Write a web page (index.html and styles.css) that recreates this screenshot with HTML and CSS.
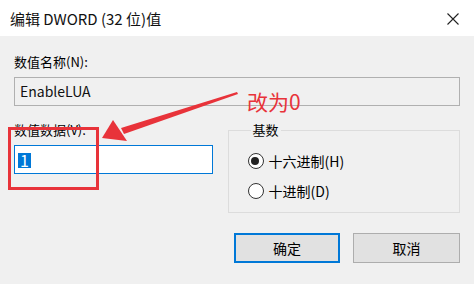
FILE: index.html
```html
<!DOCTYPE html>
<html lang="zh-CN">
  <head>
    <meta charset="UTF-8" />
    <title>编辑 DWORD (32 位)值</title>
    <link rel="stylesheet" href="styles.css">
  </head>
  <body>
    <div class="window">
      <div class="titlebar">
        <span class="title">编辑 DWORD (32 位)值</span>
        <svg class="close" width="12" height="12" viewBox="0 0 12 12">
          <path d="M0.5 0.5 L11.5 11.5 M11.5 0.5 L0.5 11.5" stroke="#222" stroke-width="1.1" fill="none" />
        </svg>
      </div>

      <div class="content">
        <div class="label">数值名称(N):</div>
        <div class="textbox readonly">EnableLUA</div>

        <div class="row">
          <div class="left">
            <div class="label">数值数据(V):</div>
            <div class="textbox focused"><span class="sel">1</span></div>
          </div>
          <fieldset class="group">
            <legend>基数</legend>
            <div class="radio"><span class="dot checked"></span>十六进制(H)</div>
            <div class="radio"><span class="dot"></span>十进制(D)</div>
          </fieldset>
        </div>

        <div class="buttons">
          <div class="btn default">确定</div>
          <div class="btn">取消</div>
        </div>
      </div>

      <!-- red annotation drawn over the dialog -->
      <div class="mark-box"></div>
      <div class="mark-text">改为0</div>
      <svg class="mark-arrow" width="474" height="284" viewBox="0 0 474 284">
        <polygon points="237,92 238,94 124,134 121,128" fill="#e8333a" />
        <polygon points="102,138 113,120 127,141" fill="#e8333a" />
      </svg>
    </div>
  </body>
</html>
```

FILE: styles.css
```css
html,
body {
  margin: 0;
  padding: 0;
}
body {
  font-family: "Noto Sans CJK SC", "Noto Sans", sans-serif;
  font-size: 13px;
  color: #000;
  background: #f0f0f0;
}
.window {
  position: relative;
  width: 474px;
  height: 284px;
  background: #f0f0f0;
  overflow: hidden;
}
.titlebar {
  height: 36px;
  background: #fff;
  display: flex;
  align-items: center;
  justify-content: space-between;
  padding: 0 15px 0 10px;
}
.title {
  font-size: 15px;
  line-height: 18px;
  margin-top: 2px;
  color: #111;
}
.close {
  margin-top: 2px;
}
.content {
  padding: 18px 14px 0 14px;
}
.label {
  line-height: 16px;
  height: 16px;
}
.textbox {
  box-sizing: border-box;
  height: 29px;
  margin-top: 7px;
  border: 1px solid #b0b0b0;
  padding: 0 5px;
  line-height: 27px;
  font-size: 14px;
}
.readonly {
  background: #f0f0f0;
  color: #111;
}
.row {
  display: flex;
  margin-top: 16px;
}
.left {
  width: 199px;
}
.left .textbox {
  margin-top: 7px;
  height: 29px;
  padding: 0 0 0 3px;
  background: #fff;
  border-color: #0078d7;
}
.sel {
  display: inline-block;
  background: #0078d7;
  color: #fff;
  font-size: 16px;
  line-height: 15px;
  height: 15px;
  padding: 0 2px;
  vertical-align: middle;
  margin-top: -1px;
}
.group {
  box-sizing: border-box;
  margin: 0 0 0 15px;
  width: 233px;
  height: 91px;
  border: 1px solid #dcdcdc;
  padding: 8px 0 0 19px;
}
.group legend {
  padding: 0 2px;
  margin-left: 3px;
  line-height: 16px;
}
.radio {
  display: flex;
  align-items: center;
  height: 30px;
  font-size: 14px;
}
.dot {
  box-sizing: border-box;
  width: 16px;
  height: 16px;
  border: 1.3px solid #333;
  border-radius: 50%;
  background: #fff;
  margin-right: 5px;
  position: relative;
}
.dot.checked::after {
  content: "";
  position: absolute;
  left: 2.7px;
  top: 2.7px;
  width: 8px;
  height: 8px;
  border-radius: 50%;
  background: #222;
}
.buttons {
  display: flex;
  justify-content: flex-end;
  gap: 13px;
  margin-top: 20px;
}
.btn {
  box-sizing: border-box;
  width: 107px;
  height: 30px;
  line-height: 28px;
  text-align: center;
  background: #e1e1e1;
  border: 1px solid #adadad;
  font-size: 14px;
}
.btn.default {
  width: 106px;
  border: 2px solid #0078d7;
  line-height: 26px;
}
.mark-box {
  position: absolute;
  left: 8px;
  top: 127px;
  width: 85px;
  height: 57px;
  border: 3px solid #e8333a;
}
.mark-text {
  position: absolute;
  left: 247px;
  top: 88px;
  font-size: 21px;
  line-height: 26px;
  color: #e8333a;
}
.mark-arrow {
  position: absolute;
  left: 0;
  top: 0;
}
```
